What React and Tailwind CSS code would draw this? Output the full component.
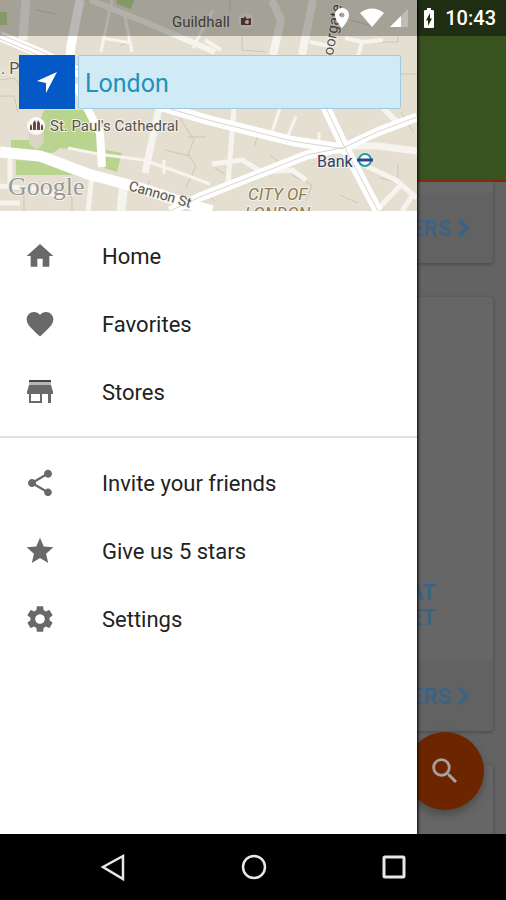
// src/App.jsx
import React, { useState } from "react";
import {
  MdHome,
  MdFavorite,
  MdShare,
  MdStar,
  MdSettings,
  MdSearch,
  MdLocationOn,
  MdBatteryChargingFull,
} from "react-icons/md";

// storefront with a striped awning
function StoreIcon({ className }) {
  return (
    <svg viewBox="0 0 32 32" className={className} fill="currentColor">
      <rect x="5" y="4" width="22" height="2" fill="#444" />
      <rect x="5" y="6" width="22" height="3" fill="#b5bab5" />
      <path d="M5 9h22l2 7v2h-2v9h-3v-9h-6v9H5v-9H3v-2zM7 18v7h9v-7z" fillRule="evenodd" />
    </svg>
  );
}

const mainItems = [
  { label: "Home", icon: MdHome },
  { label: "Favorites", icon: MdFavorite },
  { label: "Stores", icon: StoreIcon },
];

const moreItems = [
  { label: "Invite your friends", icon: MdShare },
  { label: "Give us 5 stars", icon: MdStar },
  { label: "Settings", icon: MdSettings },
];

function MenuList({ items }) {
  return (
    <ul>
      {items.map(({ label, icon: Icon }) => (
        <li key={label}>
          <button type="button" className="flex h-[68px] w-full items-center gap-[46px] pl-6 text-left text-[22px] text-[#222222]">
            <Icon className="size-8 text-[#696969]" />
            {label}
          </button>
        </li>
      ))}
    </ul>
  );
}

function CityMap() {
  return (
    <svg
      viewBox="0 0 417 211"
      preserveAspectRatio="xMidYMid slice"
      className="absolute inset-0 size-full font-[Roboto,sans-serif]"
    >
      <rect width="417" height="211" fill="#e4dfd1" />

      {/* parks */}
      <g fill="#b9d48f">
        <path d="M44 110h43l10 24v20l-17-4-20-2-7 5-42-4v-9h22z" />
        <path d="M16 160l34 2 23 8-1 5H16zM106 150l16 3-5 19-13-4zM116 0h18l-3 9-14-5zM0 12h7v13H0z" />
      </g>
      <path d="M29 120h15v22l-7 8-8-6z" fill="#dad4c4" />

      {/* block outlines */}
      <g fill="none" stroke="#cbc6b8" strokeWidth="1">
        <path d="M0 80l14-2 8 10M0 96h14l4 16M180 118l14 22-6 14 8 12-10 22M188 137h18M165 150l24 6M32 52l-3-8M242 36v14l24 2M120 46l12-6" />
        <path d="M40 170l4-20 12-8M60 160l12 14 14 4M385 60l14 14h18M374 42h24v-6M401 112l12 20M240 125l18 10-4 12M292 175l20 10-6 16M398 164v18l-18-4M270 155l15 12M340 195l18 8M215 168l10 6" />
        <path d="M8 190h16v21M60 188l12 10v13M150 180l-6 14M205 190l10 12M230 0v12M350 20l22 6M36 10l20 4" />
      </g>

      {/* side streets */}
      <g fill="none" stroke="#f6f4ee" strokeLinejoin="round">
        <path d="M26 0l-3 40" strokeWidth="9" />
        <path d="M90 0l55 22 70 30" strokeWidth="6" />
        <path d="M112 0l-11 52M124 12l8 40M102 38l30 5M193 48l20-38" strokeWidth="3" />
        <path d="M272 0l9 20-8 35" strokeWidth="8" />
        <path d="M313 0l-11 55" strokeWidth="8" />
        <path d="M345 38l18 4 20-2M362 42l-4 14M310 42l20 4M205 40l16 10" strokeWidth="4" />
        <path d="M159 108l-14 65" strokeWidth="7" />
        <path d="M68 148l30 6 46 6 34 12 32 12" strokeWidth="3" />
        <path d="M234 108l-6 76M212 164l30-4 20 12 30-2 14 10" strokeWidth="5" />
        <path d="M280 108l-8 24M296 116l-8 20M319 132v14M164 160v14" strokeWidth="3" />
        <path d="M383 108l14 14" strokeWidth="6" />
        <path d="M348 146h30l39 5" strokeWidth="7" />
        <path d="M362 164l34 16 21 18M400 186l-24 25M412 196l-10 15" strokeWidth="5" />
        <path d="M10 155v34M0 186l36 3 26 8M92 176l-4 35M0 203h20" strokeWidth="5" />
        <path d="M124 182l-3 29" strokeWidth="9" />
      </g>

      {/* main roads */}
      <g fill="none" stroke="#ffffff" strokeLinejoin="round">
        <path d="M80 0l-9 46-2 20" strokeWidth="9" />
        <path d="M76 84l12 26 12 23 2 34" strokeWidth="8" />
        <path d="M0 36l40 17 40 20 84 34 44 13 84 21 52 8" strokeWidth="10" />
        <path d="M325 106l19 40 34 65" strokeWidth="10" />
        <path d="M417 117l-40 15-32 15-38 8-107 42-30 14" strokeWidth="9" />
        <path d="M0 152l40 4 48 18 52 14 36 12 36 11" strokeWidth="11" />
      </g>
      <g fill="none" stroke="#d8d5ce" strokeWidth="1">
        <path d="M0 34l40 17 40 20M0 39l40 17M164 107l44 13 84 21 52 8M325 106l19 40 34 65M417 117l-40 15-32 15-38 8-107 42-30 14" />
      </g>

      {/* labels */}
      <g stroke="#f4f1e8" strokeWidth="2" paintOrder="stroke" fill="#55534f" fontSize="15">
        <text x="172" y="27" strokeOpacity="0.4">Guildhall</text>
        <text x="50" y="131">St. Paul's Cathedral</text>
        <text x="1" y="74" fontSize="16">. P</text>
        <text x="128" y="190" fontSize="14" transform="rotate(16 128 190)">Cannon St</text>
        <text x="333" y="56" transform="rotate(-80 333 56)">oorgate</text>
        <text x="317" y="167" fontSize="16" fill="#2c3e66">Bank</text>
        <g fill="#8b7a58" fontSize="17" fontStyle="italic">
          <text x="248" y="200">CITY OF</text>
          <text x="245" y="219">LONDON</text>
        </g>
      </g>
      <text x="8" y="195" fontSize="26" fill="#9a9893" stroke="#f3f1eb" strokeWidth="2" paintOrder="stroke" className="font-['Liberation_Serif',serif]">
        Google
      </text>

      {/* place markers */}
      <circle cx="246" cy="21" r="8" fill="#eeeae4" />
      <path d="M241 18h3l1-2 2 3 4-1v7h-10z" fill="#6b4444" />
      <circle cx="247" cy="22" r="2" fill="#eeeae4" />
      <circle cx="36" cy="126" r="9" fill="#fbf9f7" />
      <path d="M30 130v-4l1-2 1 2v4zM33 130v-7l2-3 1 3v7zM37 130v-7l1-3 2 3v7zM41 130v-4l1-2 1 2v4z" fill="#6b4444" />
      <circle cx="365" cy="160" r="6" fill="#fff" stroke="#16a0a6" strokeWidth="2" />
      <path d="M357 160h16" stroke="#34408f" strokeWidth="3" />
    </svg>
  );
}

function OffersFooter() {
  return (
    <div className="flex h-[70px] items-center justify-end gap-1 bg-[#626262] pr-[22px] text-[22px] font-bold text-[#3a6385]">
      OFFERS
      <svg viewBox="0 0 16 20" className="h-5 w-4" fill="none" stroke="currentColor" strokeWidth="4">
        <path d="M4 2l8 8-8 8" />
      </svg>
    </div>
  );
}

// dimmed storefront behind the open drawer
function Storefront() {
  return (
    <div className="pb-8">
      <header className="h-[182px] border-b-2 border-[#8f2200] bg-[#385220]">
        <div className="h-9 bg-black/20" />
      </header>
      <div className="flex flex-col gap-[34px] pr-[13px]">
        <section className="overflow-hidden rounded-b bg-[#666666] pt-[11px] shadow-[0_1px_3px_1px_#505050]">
          <OffersFooter />
        </section>
        <section className="overflow-hidden rounded bg-[#666666] shadow-[0_1px_3px_1px_#505050]">
          <div className="flex h-[364px] flex-col items-end justify-end pr-[57px] pb-[31px] text-[22px] leading-[25px] font-bold text-[#3a6385]">
            <span>AT</span>
            <span>ET</span>
          </div>
          <OffersFooter />
        </section>
        <section className="h-40 rounded bg-[#666666] shadow-[0_1px_3px_1px_#505050]" />
      </div>
    </div>
  );
}

function StatusBar() {
  return (
    <div className="absolute inset-x-0 top-0 flex h-9 items-center justify-end bg-black/28 pr-2.5 text-white">
      <MdLocationOn className="mr-[5px] size-6" />
      <svg viewBox="0 0 26 20" className="mr-1 h-5 w-[26px]" fill="currentColor">
        <path d="M1 5C8-1 18-1 25 5L13 19z" />
      </svg>
      <svg viewBox="0 0 20 20" className="mr-2 size-5">
        <path d="M1 19L19 1v18z" fill="#fff" fillOpacity="0.3" />
        <path d="M1 19L12 8v11z" fill="#fff" />
      </svg>
      <MdBatteryChargingFull className="mr-1 size-6" />
      <span className="text-xl leading-6 font-medium">10:43</span>
    </div>
  );
}

export default function App() {
  const [place, setPlace] = useState("London");

  return (
    <div className="flex h-screen flex-col bg-black font-[Roboto,sans-serif]">
      <div className="relative min-h-0 flex-1 overflow-hidden bg-[#636363]">
        <Storefront />
        <button
          type="button"
          aria-label="Search"
          className="absolute right-[22px] bottom-6 flex size-[78px] items-center justify-center rounded-full bg-[#6b2600] text-[#a7a09c] shadow-[0_5px_8px_#4c4c4c]"
        >
          <MdSearch className="size-[34px]" />
        </button>

        <aside className="absolute inset-y-0 left-0 flex w-[82.4%] flex-col bg-white shadow-[0_0_3px_1px_#000]">
          <div className="relative flex h-[211px] items-start gap-[3px] overflow-hidden pt-[55px] pr-4 pl-[19px]">
            <CityMap />
            <button
              type="button"
              aria-label="Use my location"
              className="relative flex h-[54px] w-14 items-center justify-center bg-[#0459c7] text-white"
            >
              <svg viewBox="0 0 24 24" className="size-6" fill="currentColor">
                <path d="M22 2L2 11l9 2v10z" />
              </svg>
            </button>
            <input
              type="text"
              aria-label="Location"
              value={place}
              onChange={(e) => setPlace(e.target.value)}
              className="relative h-[54px] min-w-0 flex-1 rounded-xs border border-[#9fcbe6] bg-[#d0ebf6] px-1.5 pt-0.5 text-[25px] text-[#2391b5] outline-none"
            />
          </div>

          <nav>
            <div className="border-b-2 border-[#e0e0e0] pt-[11px] pb-2.5">
              <MenuList items={mainItems} />
            </div>
            <div className="pt-[11px]">
              <MenuList items={moreItems} />
            </div>
          </nav>
        </aside>

        <StatusBar />
      </div>

      <div className="flex h-[66px] items-center justify-center gap-[109px] text-[#e8e8e8]">
        <button type="button" aria-label="Back">
          <svg viewBox="0 0 32 32" className="size-8" fill="none" stroke="currentColor" strokeWidth="2.5">
            <path d="M27 5v23L7 16z" />
          </svg>
        </button>
        <button type="button" aria-label="Home screen">
          <svg viewBox="0 0 32 32" className="size-8" fill="none" stroke="currentColor" strokeWidth="2.5">
            <circle cx="17" cy="16" r="11" />
          </svg>
        </button>
        <button type="button" aria-label="Recent apps">
          <svg viewBox="0 0 32 32" className="size-8" fill="none" stroke="currentColor" strokeWidth="3">
            <rect x="6" y="6" width="20" height="20" rx="1" />
          </svg>
        </button>
      </div>
    </div>
  );
}
